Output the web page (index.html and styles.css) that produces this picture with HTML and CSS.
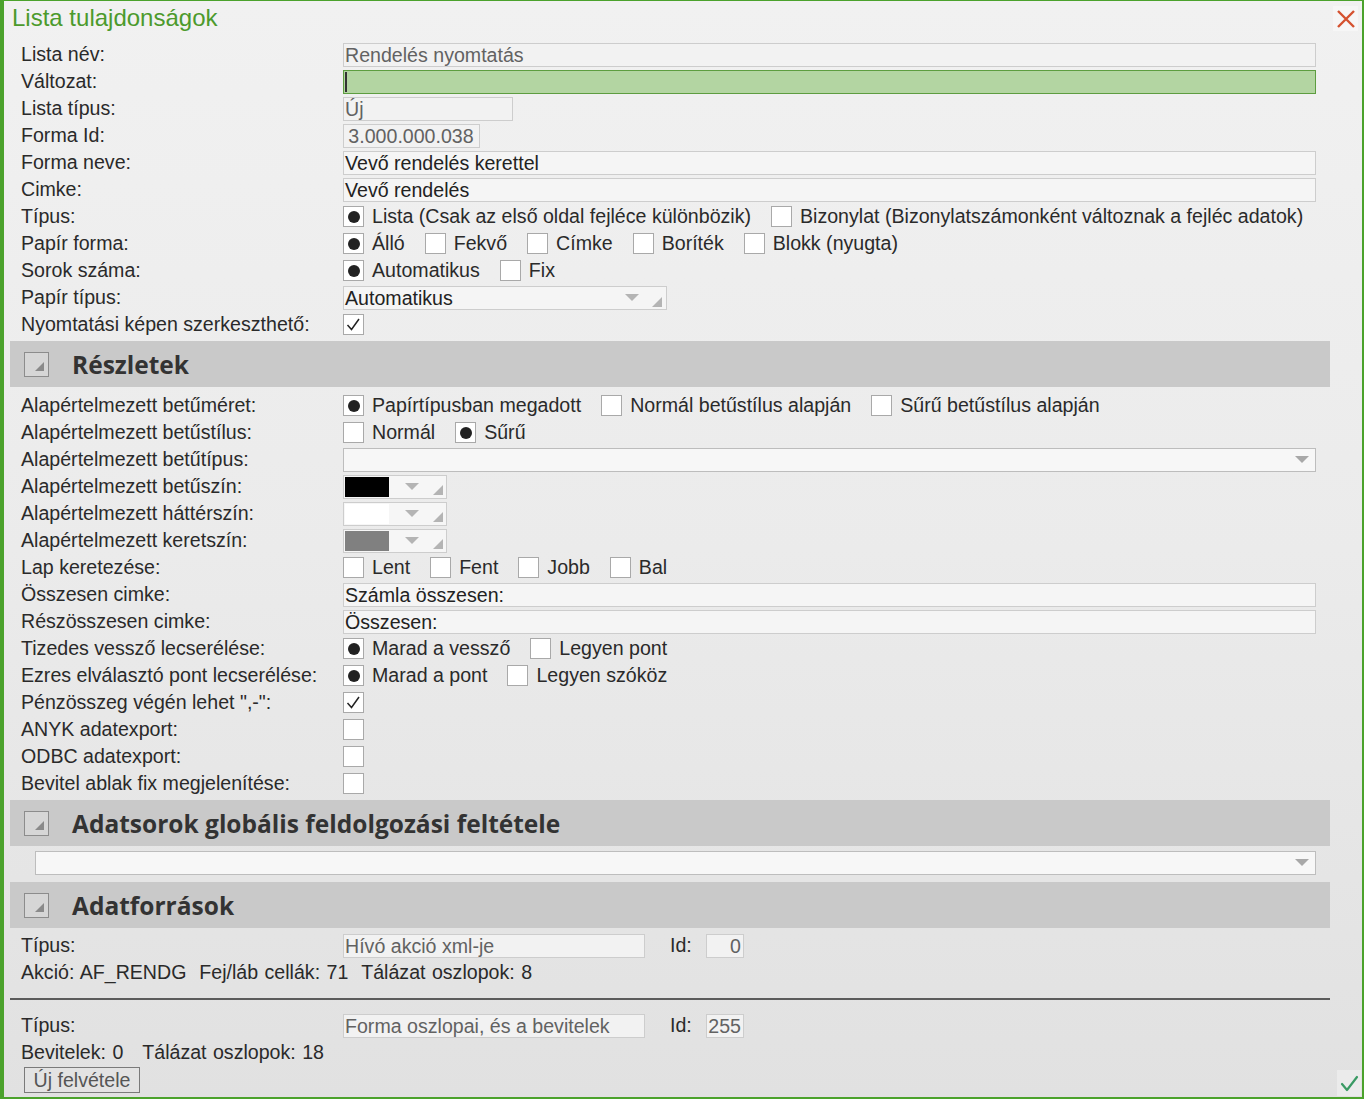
FILE: index.html
```html
<!DOCTYPE html>
<html lang="hu">
<head>
<meta charset="utf-8">
<title>Lista tulajdonságok</title>
<link rel="stylesheet" href="styles.css">
</head>
<body>
<div class="window">
  <div class="titlebar">
    <span class="title">Lista tulajdonságok</span>
    <span class="close"><svg width="20" height="20" viewBox="0 0 20 20"><path d="M2 2 L18 18 M18 2 L2 18" stroke="#d4512f" stroke-width="2.4" fill="none"/></svg></span>
  </div>
  <div class="content">
    <div class="form">
      <div class="row"><span class="lbl">Lista név:</span><div class="fld"><div class="input dim full">Rendelés nyomtatás</div></div></div>
      <div class="row"><span class="lbl">Változat:</span><div class="fld"><div class="input active full"><span class="caret"></span></div></div></div>
      <div class="row"><span class="lbl">Lista típus:</span><div class="fld"><div class="input dim w170">Új</div></div></div>
      <div class="row"><span class="lbl">Forma Id:</span><div class="fld"><div class="input dim w137 center">3.000.000.038</div></div></div>
      <div class="row"><span class="lbl">Forma neve:</span><div class="fld"><div class="input full">Vevő rendelés kerettel</div></div></div>
      <div class="row"><span class="lbl">Cimke:</span><div class="fld"><div class="input full">Vevő rendelés</div></div></div>
      <div class="row"><span class="lbl">Típus:</span><div class="fld opts">
        <span class="opt"><span class="box"><span class="dot"></span></span>Lista (Csak az első oldal fejléce különbözik)</span>
        <span class="opt"><span class="box"></span>Bizonylat (Bizonylatszámonként változnak a fejléc adatok)</span>
      </div></div>
      <div class="row"><span class="lbl">Papír forma:</span><div class="fld opts">
        <span class="opt"><span class="box"><span class="dot"></span></span>Álló</span>
        <span class="opt"><span class="box"></span>Fekvő</span>
        <span class="opt"><span class="box"></span>Címke</span>
        <span class="opt"><span class="box"></span>Boríték</span>
        <span class="opt"><span class="box"></span>Blokk (nyugta)</span>
      </div></div>
      <div class="row"><span class="lbl">Sorok száma:</span><div class="fld opts">
        <span class="opt"><span class="box"><span class="dot"></span></span>Automatikus</span>
        <span class="opt"><span class="box"></span>Fix</span>
      </div></div>
      <div class="row"><span class="lbl">Papír típus:</span><div class="fld"><div class="input combo w324"><span class="val">Automatikus</span><svg class="arrow" width="14" height="8" viewBox="0 0 14 8"><polygon points="0,0 14,0 7,7" fill="#b4b4b4"/></svg><svg class="grip" width="10" height="10" viewBox="0 0 10 10"><polygon points="10,0 10,10 0,10" fill="#b4b4b4"/></svg></div></div></div>
      <div class="row"><span class="lbl">Nyomtatási képen szerkeszthető:</span><div class="fld opts">
        <span class="opt"><span class="box"><svg width="19" height="19" viewBox="0 0 19 19"><path d="M3.5 10 L7.5 14.5 L15 4" stroke="#222" stroke-width="1.5" fill="none"/></svg></span></span>
      </div></div>
    </div>

    <div class="band"><span class="toggle"><svg width="9" height="9" viewBox="0 0 9 9"><polygon points="9,0 9,9 0,9" fill="#8a8a8a"/></svg></span><h2>Részletek</h2></div>

    <div class="form second">
      <div class="row"><span class="lbl">Alapértelmezett betűméret:</span><div class="fld opts">
        <span class="opt"><span class="box"><span class="dot"></span></span>Papírtípusban megadott</span>
        <span class="opt"><span class="box"></span>Normál betűstílus alapján</span>
        <span class="opt"><span class="box"></span>Sűrű betűstílus alapján</span>
      </div></div>
      <div class="row"><span class="lbl">Alapértelmezett betűstílus:</span><div class="fld opts">
        <span class="opt"><span class="box"></span>Normál</span>
        <span class="opt"><span class="box"><span class="dot"></span></span>Sűrű</span>
      </div></div>
      <div class="row"><span class="lbl">Alapértelmezett betűtípus:</span><div class="fld"><div class="input combo full light"><span class="val"></span><svg class="arrow" width="14" height="8" viewBox="0 0 14 8"><polygon points="0,0 14,0 7,7" fill="#a8a8a8"/></svg></div></div></div>
      <div class="row"><span class="lbl">Alapértelmezett betűszín:</span><div class="fld"><div class="input color"><span class="swatch black"></span><svg class="arrow" width="14" height="8" viewBox="0 0 14 8"><polygon points="0,0 14,0 7,7" fill="#b4b4b4"/></svg><svg class="grip" width="10" height="10" viewBox="0 0 10 10"><polygon points="10,0 10,10 0,10" fill="#b4b4b4"/></svg></div></div></div>
      <div class="row"><span class="lbl">Alapértelmezett háttérszín:</span><div class="fld"><div class="input color"><span class="swatch white"></span><svg class="arrow" width="14" height="8" viewBox="0 0 14 8"><polygon points="0,0 14,0 7,7" fill="#b4b4b4"/></svg><svg class="grip" width="10" height="10" viewBox="0 0 10 10"><polygon points="10,0 10,10 0,10" fill="#b4b4b4"/></svg></div></div></div>
      <div class="row"><span class="lbl">Alapértelmezett keretszín:</span><div class="fld"><div class="input color"><span class="swatch gray"></span><svg class="arrow" width="14" height="8" viewBox="0 0 14 8"><polygon points="0,0 14,0 7,7" fill="#b4b4b4"/></svg><svg class="grip" width="10" height="10" viewBox="0 0 10 10"><polygon points="10,0 10,10 0,10" fill="#b4b4b4"/></svg></div></div></div>
      <div class="row"><span class="lbl">Lap keretezése:</span><div class="fld opts">
        <span class="opt"><span class="box"></span>Lent</span>
        <span class="opt"><span class="box"></span>Fent</span>
        <span class="opt"><span class="box"></span>Jobb</span>
        <span class="opt"><span class="box"></span>Bal</span>
      </div></div>
      <div class="row"><span class="lbl">Összesen cimke:</span><div class="fld"><div class="input full">Számla összesen:</div></div></div>
      <div class="row"><span class="lbl">Részösszesen cimke:</span><div class="fld"><div class="input full">Összesen:</div></div></div>
      <div class="row"><span class="lbl">Tizedes vessző lecserélése:</span><div class="fld opts">
        <span class="opt"><span class="box"><span class="dot"></span></span>Marad a vessző</span>
        <span class="opt"><span class="box"></span>Legyen pont</span>
      </div></div>
      <div class="row"><span class="lbl">Ezres elválasztó pont lecserélése:</span><div class="fld opts">
        <span class="opt"><span class="box"><span class="dot"></span></span>Marad a pont</span>
        <span class="opt"><span class="box"></span>Legyen szóköz</span>
      </div></div>
      <div class="row"><span class="lbl">Pénzösszeg végén lehet ",-":</span><div class="fld opts"><span class="opt"><span class="box"><svg width="19" height="19" viewBox="0 0 19 19"><path d="M3.5 10 L7.5 14.5 L15 4" stroke="#222" stroke-width="1.5" fill="none"/></svg></span></span></div></div>
      <div class="row"><span class="lbl">ANYK adatexport:</span><div class="fld opts"><span class="opt"><span class="box"></span></span></div></div>
      <div class="row"><span class="lbl">ODBC adatexport:</span><div class="fld opts"><span class="opt"><span class="box"></span></span></div></div>
      <div class="row"><span class="lbl">Bevitel ablak fix megjelenítése:</span><div class="fld opts"><span class="opt"><span class="box"></span></span></div></div>
    </div>

    <div class="band"><span class="toggle"><svg width="9" height="9" viewBox="0 0 9 9"><polygon points="9,0 9,9 0,9" fill="#8a8a8a"/></svg></span><h2>Adatsorok globális feldolgozási feltétele</h2></div>
    <div class="cond"><div class="input combo light"><span class="val"></span><svg class="arrow" width="14" height="8" viewBox="0 0 14 8"><polygon points="0,0 14,0 7,7" fill="#a8a8a8"/></svg></div></div>

    <div class="band"><span class="toggle"><svg width="9" height="9" viewBox="0 0 9 9"><polygon points="9,0 9,9 0,9" fill="#8a8a8a"/></svg></span><h2>Adatforrások</h2></div>

    <div class="source">
      <div class="row"><span class="lbl">Típus:</span><div class="fld"><div class="input dim w302">Hívó akció xml-je</div><span class="idlbl">Id:</span><div class="input dim idbox">0</div></div></div>
      <div class="info">Akció: AF_RENDG&nbsp;&nbsp;Fej/láb cellák: 71&nbsp;&nbsp;Tálázat oszlopok: 8</div>
    </div>
    <div class="sep"></div>
    <div class="source second">
      <div class="row"><span class="lbl">Típus:</span><div class="fld"><div class="input dim w302">Forma oszlopai, és a bevitelek</div><span class="idlbl">Id:</span><div class="input dim idbox">255</div></div></div>
      <div class="info">Bevitelek: 0&nbsp;&nbsp; Tálázat oszlopok: 18</div>
      <div class="btnrow"><button class="newbtn">Új felvétele</button></div>
    </div>
  </div>
  <span class="ok"><svg width="20" height="20" viewBox="0 0 20 20"><path d="M3 11 L8 17 L18 4" stroke="#3a9a64" stroke-width="2.2" fill="none" stroke-linecap="round" stroke-linejoin="round"/></svg></span>
</div>
</body>
</html>
```

FILE: styles.css
```css
html, body {
  margin: 0;
  padding: 0;
}
body {
  width: 1364px;
  height: 1099px;
  overflow: hidden;
  font-family: "Liberation Sans", Arial, sans-serif;
  font-size: 19.6px;
  color: #2a2a2a;
}
.window {
  position: relative;
  box-sizing: border-box;
  width: 1364px;
  height: 1099px;
  border-left: 4px solid #4ba22c;
  border-top: 1px solid #4ba22c;
  border-right: 2px solid #4ba22c;
  border-bottom: 2px solid #4ba22c;
  background: linear-gradient(to bottom, #f1f1f1 0%, #ebebeb 50%, #e1e1e1 100%);
}
.titlebar {
  height: 40px;
  display: flex;
  align-items: flex-start;
  justify-content: space-between;
}
.title {
  margin: 3px 0 0 8px;
  font-size: 24px;
  color: #4c9a2c;
}
.close {
  margin: 5px 4px 0 0;
  width: 25px;
  height: 25px;
  display: flex;
  align-items: center;
  justify-content: center;
  background: #f6f6f6;
}
.content {
  margin-left: 6px;
  width: 1320px;
}
.form {
  display: flex;
  flex-direction: column;
}
.form.second {
  margin-top: 5px;
}
.row {
  display: grid;
  grid-template-columns: 333px 1fr;
  height: 27px;
  align-items: center;
}
.lbl {
  padding-left: 11px;
  white-space: nowrap;
  color: #2a2a2a;
}
.fld {
  display: flex;
  align-items: center;
  padding-right: 14px;
}
.input {
  box-sizing: border-box;
  height: 24px;
  line-height: 22px;
  border: 1px solid #cdcdcd;
  background: #f5f5f5;
  padding: 0 2px 0 1px;
  color: #222;
  white-space: nowrap;
  overflow: hidden;
  position: relative;
}
.input.dim {
  color: #626262;
  background: #f2f2f2;
}
.input.full { flex: 1; }
.input.w170 { width: 170px; }
.input.w137 { width: 137px; }
.input.w324 { width: 324px; }
.input.w302 { width: 302px; }
.input.center { text-align: center; }
.input.active {
  background: #b3d5a2;
  border-color: #5d9d40;
}
.caret {
  display: inline-block;
  width: 2px;
  height: 20px;
  background: #333;
  vertical-align: middle;
  margin-top: -2px;
}
.input.combo {
  display: flex;
  align-items: center;
}
.input.combo .val { flex: 1; color: #222; }
.input.combo .arrow { margin-right: 13px; }
.input.combo .grip { align-self: flex-end; margin-bottom: 2px; margin-right: 2px; }
.input.light { background: #f7f7f7; border-color: #bdbdbd; }
.input.light .arrow { margin-right: 4px; }
.input.color {
  width: 104px;
  display: flex;
  align-items: center;
  padding: 1px;
  background: #f6f6f6;
}
.swatch {
  width: 44px;
  height: 20px;
  margin-right: 16px;
}
.swatch.black { background: #000; }
.swatch.white { background: #fff; }
.swatch.gray { background: #808080; }
.input.color .arrow { margin-right: 14px; }
.input.color .grip { align-self: flex-end; margin-bottom: 2px; }
.opts { gap: 0; }
.opt {
  display: inline-flex;
  align-items: center;
  margin-right: 20px;
  white-space: nowrap;
}
.box {
  box-sizing: border-box;
  width: 21px;
  height: 21px;
  border: 1px solid #a9a9a9;
  background: #fff;
  margin-right: 8px;
  display: inline-flex;
  align-items: center;
  justify-content: center;
}
.dot {
  width: 12px;
  height: 12px;
  border-radius: 50%;
  background: #222;
}
.band {
  height: 46px;
  margin-top: 3px;
  background: #c9c9c9;
  display: flex;
  align-items: center;
}
.toggle {
  box-sizing: border-box;
  width: 25px;
  height: 25px;
  margin-left: 14px;
  border: 1px solid #8c8c8c;
  background: #d6d6d6;
  display: flex;
  align-items: flex-end;
  justify-content: flex-end;
  padding: 0 4px 5px 0;
}
.band h2 {
  margin: 0 0 0 23px;
  font-family: "Open Sans", "Noto Sans", sans-serif;
  font-weight: 700;
  font-size: 24.5px;
  color: #333;
}
.cond {
  padding: 5px 14px 4px 25px;
  display: flex;
}
.cond .input { flex: 1; }
.source .row .fld .idlbl {
  margin-left: 25px;
  width: 36px;
}
.input.idbox {
  width: 38px;
  text-align: right;
}
.source { padding-top: 4px; }
.source.second { padding-top: 12px; }
.info {
  height: 27px;
  line-height: 27px;
  padding-left: 11px;
  word-spacing: 1px;
}
.sep {
  height: 2px;
  background: #5b5b5b;
  margin-top: 12px;
}
.btnrow {
  padding-left: 14px;
}
.newbtn {
  box-sizing: border-box;
  height: 26px;
  width: 116px;
  font-family: "Liberation Sans", Arial, sans-serif;
  font-size: 19.6px;
  color: #555;
  background: #e3e3e3;
  border: 1px solid #7a7a7a;
  padding: 0;
  margin-top: 1px;
  line-height: 22px;
}
.ok {
  position: absolute;
  right: 1px;
  bottom: 1px;
  width: 24px;
  height: 26px;
  display: flex;
  align-items: center;
  justify-content: center;
  background: #ebebeb;
}
```
